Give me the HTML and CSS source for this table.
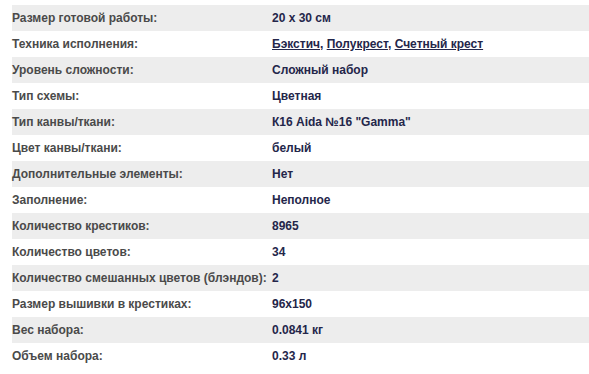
FILE: index.html
```html
<!DOCTYPE html>
<html lang="ru">
<head>
<meta charset="utf-8">
<link rel="stylesheet" href="styles.css">
</head>
<body>
<table class="specs">
  <tr><td class="label">Размер готовой работы:</td><td class="value">20 x 30 см</td></tr>
  <tr><td class="label">Техника исполнения:</td><td class="value"><a href="#">Бэкстич</a>, <a href="#">Полукрест</a>, <a href="#">Счетный крест</a></td></tr>
  <tr><td class="label">Уровень сложности:</td><td class="value">Сложный набор</td></tr>
  <tr><td class="label">Тип схемы:</td><td class="value">Цветная</td></tr>
  <tr><td class="label">Тип канвы/ткани:</td><td class="value">К16 Aida №16 "Gamma"</td></tr>
  <tr><td class="label">Цвет канвы/ткани:</td><td class="value">белый</td></tr>
  <tr><td class="label">Дополнительные элементы:</td><td class="value">Нет</td></tr>
  <tr><td class="label">Заполнение:</td><td class="value">Неполное</td></tr>
  <tr><td class="label">Количество крестиков:</td><td class="value">8965</td></tr>
  <tr><td class="label">Количество цветов:</td><td class="value">34</td></tr>
  <tr><td class="label">Количество смешанных цветов (блэндов):</td><td class="value">2</td></tr>
  <tr><td class="label">Размер вышивки в крестиках:</td><td class="value">96x150</td></tr>
  <tr><td class="label">Вес набора:</td><td class="value">0.0841 кг</td></tr>
  <tr><td class="label">Объем набора:</td><td class="value">0.33 л</td></tr>
</table>
</body>
</html>
```

FILE: styles.css
```css
html, body {
  margin: 0;
  background: #fff;
}
body {
  padding: 5px 0 0 12px;
  font-family: "Liberation Sans", Arial, sans-serif;
  font-size: 12px;
  font-weight: bold;
}
.specs {
  border-collapse: collapse;
  width: 577px;
}
.specs tr:nth-child(odd) {
  background: #ededed;
}
.specs td {
  height: 26px;
  padding: 0;
  vertical-align: middle;
  line-height: 14px;
}
.label {
  width: 260px;
  color: #4a4a4a;
}
.value {
  color: #24264a;
}
.value a {
  color: #24264a;
  text-decoration: underline;
}
```
